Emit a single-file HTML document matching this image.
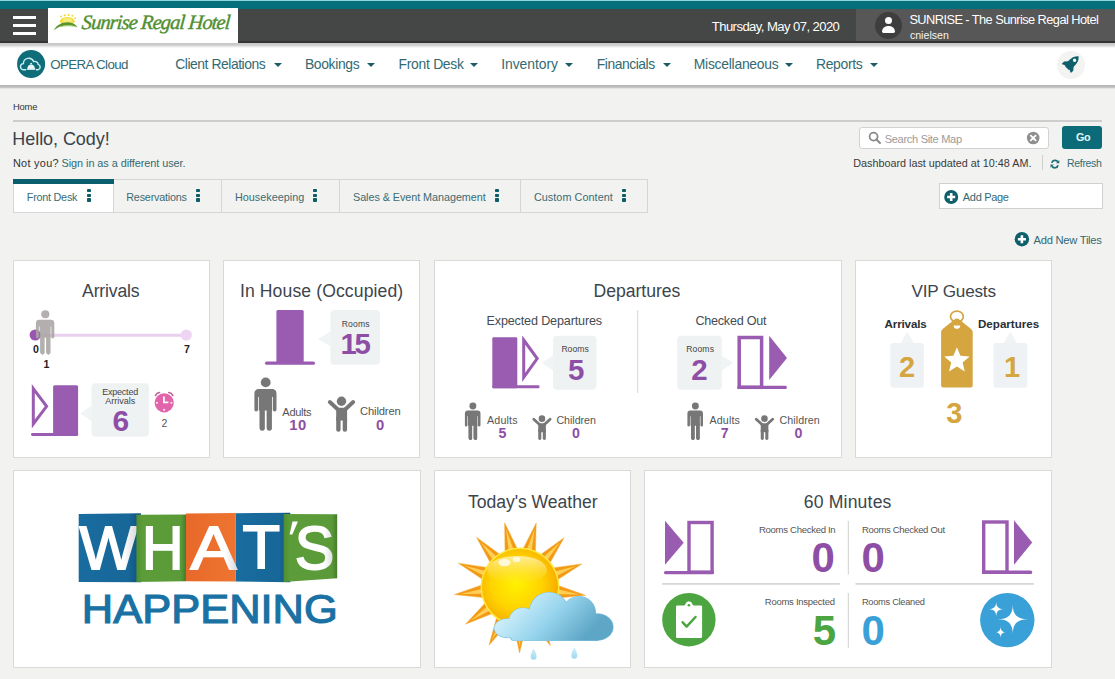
<!DOCTYPE html>
<html><head><meta charset="utf-8">
<style>
*{box-sizing:border-box;margin:0;padding:0}
html,body{width:1115px;height:679px;overflow:hidden;background:#f2f2f0;font-family:"Liberation Sans",sans-serif;color:#333;position:relative}
.a{position:absolute}
.t{position:absolute;white-space:nowrap;line-height:1}
.caret{position:absolute;width:0;height:0;border-left:4px solid transparent;border-right:4px solid transparent;border-top:4.5px solid #1d5c66}
.tile{position:absolute;background:#fff;border:1px solid #d9d9d9}
.tab{position:absolute;top:179px;height:34px;border:1px solid #d6d6d6;border-left:none;background:#f2f2f0}
.keb{position:absolute;top:189px;width:4px}
.keb i{display:block;width:3.6px;height:3.4px;background:#0f5c69;border-radius:0.8px;margin-bottom:1.2px}
.bub{position:absolute;background:#eef2f3;border-radius:3px}
svg{position:absolute;overflow:visible}
</style></head><body>
<!-- header bars -->
<div class="a" style="left:0;top:0;width:1115px;height:1px;background:#8fd3dc"></div>
<div class="a" style="left:0;top:1px;width:1115px;height:7.5px;background:#066f7c"></div>
<div class="a" style="left:0;top:8.5px;width:1115px;height:34px;background:#454646"></div>
<div class="a" style="left:856px;top:8.5px;width:259px;height:34px;background:#575757"></div>
<div class="a" style="left:0;top:41px;width:1115px;height:1.7px;background:#333"></div>
<!-- hamburger -->
<div class="a" style="left:12.5px;top:16px;width:23px;height:3px;background:#fff"></div>
<div class="a" style="left:12.5px;top:23.5px;width:23px;height:3px;background:#fff"></div>
<div class="a" style="left:12.5px;top:32px;width:23px;height:3px;background:#fff"></div>
<!-- logo -->
<div class="a" style="left:48px;top:8px;width:190px;height:35px;background:#fff"></div>
<div class="t" style="left:80.5px;top:12px;font-family:'Liberation Serif';font-style:italic;font-size:20.5px;color:#4f8f30;-webkit-text-stroke:0.4px #4f8f30;letter-spacing:-0.92px;transform:skewX(-5deg);transform-origin:0 100%">Sunrise Regal Hotel</div>
<!-- avatar -->
<div class="a" style="left:874.5px;top:11.5px;width:27px;height:27px;border-radius:50%;background:#3e3e3e"></div>
<div class="a" style="left:884.5px;top:17px;width:7px;height:7px;border-radius:50%;background:#fff"></div>
<div class="a" style="left:881.5px;top:25.5px;width:13px;height:7.5px;border-radius:6px 6px 1.5px 1.5px;background:#fff"></div>

<!-- nav -->
<div class="a" style="left:0;top:42.7px;width:1115px;height:42px;background:#fff"></div>
<div class="a" style="left:0;top:42.7px;width:1115px;height:5px;background:linear-gradient(#c6c6c6,#d0d0d0 45%,#fff)"></div>
<div class="a" style="left:0;top:84.6px;width:1115px;height:4px;background:linear-gradient(#b8b8b8,#bababa 50%,#f1f1ef)"></div>
<div class="caret" style="left:273.5px;top:62.5px"></div>
<div class="caret" style="left:367px;top:62.5px"></div>
<div class="caret" style="left:470px;top:62.5px"></div>
<div class="caret" style="left:565px;top:62.5px"></div>
<div class="caret" style="left:662.5px;top:62.5px"></div>
<div class="caret" style="left:785px;top:62.5px"></div>
<div class="caret" style="left:870px;top:62.5px"></div>
<div class="a" style="left:1056.5px;top:51px;width:28px;height:28px;border-radius:50%;background:#f3f3f1"></div>

<!-- breadcrumb line -->
<div class="a" style="left:13px;top:120px;width:1089px;height:1.5px;background:#cdcdcd"></div>

<!-- tabs -->
<div class="tab" style="left:13px;width:101px;border-left:1px solid #d6d6d6;background:#fff;border-top:none"></div>
<div class="a" style="left:13px;top:179px;width:101px;height:4.5px;background:#0b5e6b"></div>
<div class="tab" style="left:114px;width:108px"></div>
<div class="tab" style="left:222px;width:118px"></div>
<div class="tab" style="left:340px;width:181px"></div>
<div class="tab" style="left:521px;width:127px"></div>
<div class="keb" style="left:87.4px"><i></i><i></i><i></i></div>
<div class="keb" style="left:196px"><i></i><i></i><i></i></div>
<div class="keb" style="left:313px"><i></i><i></i><i></i></div>
<div class="keb" style="left:495px"><i></i><i></i><i></i></div>
<div class="keb" style="left:622px"><i></i><i></i><i></i></div>

<!-- right controls -->
<div class="a" style="left:859px;top:126.5px;width:190px;height:22.5px;background:#fff;border:1px solid #d2d2d2;border-radius:3px"></div>
<div class="a" style="left:1055px;top:126px;width:0;height:0"></div>
<div class="a" style="left:1062px;top:125.7px;width:40px;height:23px;background:#0b6b78;border-radius:3px"></div>
<div class="a" style="left:1041.5px;top:154.5px;width:1px;height:15px;background:#cfcfcf"></div>
<div class="a" style="left:939px;top:183px;width:163.5px;height:25.7px;background:#fff;border:1px solid #d0d0d0"></div>

<!-- tiles -->
<div class="tile" style="left:13px;top:260px;width:197px;height:198px"></div>
<div class="tile" style="left:223px;top:260px;width:197px;height:198px"></div>
<div class="tile" style="left:434px;top:260px;width:408px;height:198px"></div>
<div class="tile" style="left:855px;top:260px;width:197px;height:198px"></div>
<div class="tile" style="left:13px;top:470px;width:408px;height:198px"></div>
<div class="tile" style="left:434px;top:470px;width:197px;height:198px"></div>
<div class="tile" style="left:644px;top:470px;width:408px;height:198px"></div>
<svg width="1115" height="679" style="left:0;top:0" viewBox="0 0 1115 679">
<defs>
<radialGradient id="sunG" cx="0.45" cy="0.45" r="0.6">
<stop offset="0" stop-color="#fff200"/><stop offset="0.55" stop-color="#ffd400"/><stop offset="1" stop-color="#f6a400"/>
</radialGradient>
<linearGradient id="rayG" x1="0" y1="0" x2="1" y2="1">
<stop offset="0" stop-color="#ffd23a"/><stop offset="1" stop-color="#f39a10"/>
</linearGradient>
<linearGradient id="cloudG" x1="0" y1="0" x2="0.3" y2="1">
<stop offset="0" stop-color="#c9eefb"/><stop offset="0.5" stop-color="#93d0ea"/><stop offset="1" stop-color="#5aa9cc"/>
</linearGradient>
<linearGradient id="leafG" x1="0" y1="0" x2="1" y2="0">
<stop offset="0" stop-color="#4f8f2a"/><stop offset="1" stop-color="#9ccc5a"/>
</linearGradient>
</defs>

<!-- logo sun/leaf -->
<g>
<ellipse cx="67.3" cy="21.2" rx="7.4" ry="4.2" fill="#f3df45"/>
<ellipse cx="67.3" cy="20.6" rx="4.5" ry="2.6" fill="#f8ec7a"/>
<g fill="#f0d83c"><circle cx="61" cy="16.6" r="1"/><circle cx="64.6" cy="15.2" r="1"/><circle cx="68.6" cy="14.9" r="1"/><circle cx="72.4" cy="15.8" r="1"/><circle cx="75.2" cy="18" r="0.9"/></g>
<path d="M53.6,30.6C56.5,24.5 63,21.6 69,22.3C73,22.8 76.2,24.8 77.4,27.4C73.5,25.3 67,24.6 61.5,26.2C58,27.2 55.5,28.8 53.6,30.6Z" fill="#5a9630"/>
<path d="M59,27C64,24.6 71,24.4 77.4,27.4C72,26 65,26 59,27Z" fill="#9bc95a"/>
</g>
<!-- opera cloud icon -->
<circle cx="31.1" cy="64" r="14" fill="#0e6d79"/>
<path d="M26,69.8H23.8A3.1,3.1 0 0 1 23.4,63.6A5.3,5.3 0 0 1 33.6,61.6A3.4,3.4 0 0 1 38.2,64.4A2.8,2.8 0 0 1 38,69.8H36" fill="none" stroke="#c4f0f2" stroke-width="1.4"/>
<path d="M27.2,69.4A3.9,5 0 0 1 35,69.4Z" fill="#e8f6f6"/>
<rect x="26.6" y="68.8" width="8.9" height="1.1" fill="#d0e4e4"/>
<circle cx="31.1" cy="63.6" r="0.9" fill="#e8f6f6"/>
<!-- rocket -->
<g transform="translate(1070.6,64.2) rotate(45) scale(0.9)" fill="#0e5f6b">
<path d="M0,-12.5C4,-9.5 5,-4 4,3L3,6H-3L-4,3C-5,-4 -4,-9.5 0,-12.5Z"/>
<path d="M-3.8,-1L-7.2,3L-7.2,6.8L-3,5Z M3.8,-1L7.2,3L7.2,6.8L3,5Z"/>
<circle cx="0" cy="-6.3" r="1.9" fill="#e8f6f6"/>
</g>

<!-- search + clear -->
<circle cx="873.6" cy="136.6" r="4" fill="none" stroke="#8a8a8a" stroke-width="1.8"/>
<line x1="876.5" y1="139.5" x2="880" y2="143" stroke="#8a8a8a" stroke-width="2" stroke-linecap="round"/>
<circle cx="1033.2" cy="138" r="6.3" fill="#8f8f8f"/>
<path d="M1030.8,135.6L1035.6,140.4M1035.6,135.6L1030.8,140.4" stroke="#fff" stroke-width="1.8" stroke-linecap="round"/>

<!-- refresh -->
<g fill="none" stroke="#1d6b77" stroke-width="1.7">
<path d="M1051.8,162.9A3.3,3.3 0 0 1 1057.8,161.8"/>
<path d="M1058,165.2A3.3,3.3 0 0 1 1052,166.3"/>
</g>
<path d="M1059.3,159.9V163.2H1056Z M1050.5,167.8V164.5H1053.8Z" fill="#1d6b77"/>
<!-- plus circles -->
<circle cx="951.2" cy="197" r="7" fill="#0e5f6c"/>
<path d="M947.2,197H955.2M951.2,193V201" stroke="#fff" stroke-width="2.6"/>
<circle cx="1021.9" cy="239.2" r="7.2" fill="#0e5f6c"/>
<path d="M1017.9,239.2H1025.9M1021.9,235.2V243.2" stroke="#fff" stroke-width="2.6"/>

<!-- ===== Tile 1 Arrivals ===== -->
<line x1="36" y1="335.2" x2="186" y2="335.2" stroke="#ead0ef" stroke-width="3"/>
<circle cx="35.2" cy="335" r="5.6" fill="#9a55b2"/>
<circle cx="186.3" cy="335" r="5.6" fill="#edd5f3"/>
<g transform="translate(35.9,310.2) scale(0.8326,0.8324)" fill="#a9a5a3" opacity="0.88"><circle cx="11.3" cy="4.9" r="4.9"/>
<path d="M4.2,11.5H17.9A4.2,4.2 0 0 1 22.1,15.7V32.3A1.8,1.8 0 0 1 18.5,32.3V19.5H17.7V33H4.4V19.5H3.6V32.3A1.8,1.8 0 0 1 0,32.3V15.7A4.2,4.2 0 0 1 4.2,11.5Z"/>
<path d="M5.3,30H10.2V51A2.1,2.1 0 0 1 6,51H5.3Z M12.4,30H17.3V51A2.1,2.1 0 0 1 13.1,51H12.4Z"/>
<rect x="5.3" y="30" width="4.9" height="23.1" rx="2.2"/>
<rect x="12.4" y="30" width="4.9" height="23.1" rx="2.2"/></g>
<path d="M33.3,388.6L46.6,406.3L33.3,424Z" fill="none" stroke="#9a5cb0" stroke-width="3"/>
<rect x="53.1" y="385.3" width="25" height="50.4" rx="1.5" fill="#9a5cb0"/>
<rect x="31" y="433" width="47.1" height="3" rx="1.4" fill="#9a5cb0"/>
<rect x="91.6" y="383.3" width="57.3" height="53.5" rx="4" fill="#eef2f3"/>
<path d="M91.8,405.6L80.4,413.5L91.8,421.5Z" fill="#f1f4f4"/>
<path d="M155.5,395.5A5,5 0 0 1 159.5,392.5M168.8,392.5A5,5 0 0 1 172.8,395.5" stroke="#b8638e" stroke-width="1.6" fill="none" stroke-linecap="round"/>
<circle cx="164.2" cy="402.8" r="9.6" fill="#e264aa"/>
<path d="M163.9,396.4V402.4H168.4" stroke="#fff" stroke-width="1.8" fill="none"/>
<circle cx="156.9" cy="402.8" r="1.1" fill="#fbe0ef"/><circle cx="171.4" cy="402.8" r="1.1" fill="#fbe0ef"/><circle cx="164.1" cy="409.8" r="1.1" fill="#fbe0ef"/>

<!-- ===== Tile 2 In House ===== -->
<rect x="276.4" y="310" width="27.3" height="53" rx="1.5" fill="#9a5cb0"/>
<rect x="265" y="361.6" width="50" height="3.2" rx="1.6" fill="#9a5cb0"/>
<rect x="330.4" y="310" width="49.6" height="54.7" rx="4" fill="#eef2f3"/>
<path d="M330.6,331.5L317.8,339L330.6,346.5Z" fill="#f1f4f4"/>
<g transform="translate(254.4,377.5) scale(1.0000,1.0000)" fill="#777"><circle cx="11.3" cy="4.9" r="4.9"/>
<path d="M4.2,11.5H17.9A4.2,4.2 0 0 1 22.1,15.7V32.3A1.8,1.8 0 0 1 18.5,32.3V19.5H17.7V33H4.4V19.5H3.6V32.3A1.8,1.8 0 0 1 0,32.3V15.7A4.2,4.2 0 0 1 4.2,11.5Z"/>
<path d="M5.3,30H10.2V51A2.1,2.1 0 0 1 6,51H5.3Z M12.4,30H17.3V51A2.1,2.1 0 0 1 13.1,51H12.4Z"/>
<rect x="5.3" y="30" width="4.9" height="23.1" rx="2.2"/>
<rect x="12.4" y="30" width="4.9" height="23.1" rx="2.2"/></g>
<g transform="translate(325.0,394.0) scale(1.0000,1.0000)" fill="#777" stroke="#777"><circle cx="16.5" cy="7.2" r="4.7" stroke="none"/>
<path d="M4.8,8L12.6,15.2M28.2,8L20.4,15.2" stroke-width="3.9" stroke-linecap="round" fill="none"/>
<path d="M13,13.8H20.3A1.8,1.8 0 0 1 22.1,15.6V26.5H11.2V15.6A1.8,1.8 0 0 1 13,13.8Z" stroke="none"/>
<rect x="11.2" y="22" width="4.4" height="15.8" rx="2.1" stroke="none"/>
<rect x="17.7" y="22" width="4.4" height="15.8" rx="2.1" stroke="none"/></g>

<!-- ===== Tile 3 Departures ===== -->
<rect x="492.3" y="337.3" width="25" height="50.9" rx="1.2" fill="#9a5cb0"/>
<path d="M523.7,340L537.2,358.6L523.7,377.3Z" fill="none" stroke="#9a5cb0" stroke-width="3"/>
<rect x="492.3" y="385.2" width="47.2" height="3" rx="1.2" fill="#9a5cb0"/>
<rect x="552.9" y="335.7" width="43.6" height="54.1" rx="4" fill="#eef2f3"/>
<path d="M553.1,355.5L541.6,363L553.1,370.5Z" fill="#f1f4f4"/>
<line x1="637.6" y1="310.3" x2="637.6" y2="393.1" stroke="#dcdcdc" stroke-width="1.2"/>
<rect x="677.2" y="335.7" width="44.6" height="54.1" rx="4" fill="#eef2f3"/>
<path d="M721.6,355.5L733.4,363L721.6,370.5Z" fill="#f1f4f4"/>
<rect x="739.2" y="337.5" width="22.4" height="49.8" fill="none" stroke="#9a5cb0" stroke-width="3.5"/>
<path d="M769.2,335.7L787,358L769.2,380.1Z" fill="#9a5cb0"/>
<rect x="737.4" y="385.7" width="49.4" height="3.3" rx="1.2" fill="#9a5cb0"/>
<g transform="translate(464.9,402.5) scale(0.7059,0.7043)" fill="#777"><circle cx="11.3" cy="4.9" r="4.9"/>
<path d="M4.2,11.5H17.9A4.2,4.2 0 0 1 22.1,15.7V32.3A1.8,1.8 0 0 1 18.5,32.3V19.5H17.7V33H4.4V19.5H3.6V32.3A1.8,1.8 0 0 1 0,32.3V15.7A4.2,4.2 0 0 1 4.2,11.5Z"/>
<path d="M5.3,30H10.2V51A2.1,2.1 0 0 1 6,51H5.3Z M12.4,30H17.3V51A2.1,2.1 0 0 1 13.1,51H12.4Z"/>
<rect x="5.3" y="30" width="4.9" height="23.1" rx="2.2"/>
<rect x="12.4" y="30" width="4.9" height="23.1" rx="2.2"/></g>
<g transform="translate(530.4,413.6) scale(0.7000,0.7000)" fill="#777" stroke="#777"><circle cx="16.5" cy="7.2" r="4.7" stroke="none"/>
<path d="M4.8,8L12.6,15.2M28.2,8L20.4,15.2" stroke-width="3.9" stroke-linecap="round" fill="none"/>
<path d="M13,13.8H20.3A1.8,1.8 0 0 1 22.1,15.6V26.5H11.2V15.6A1.8,1.8 0 0 1 13,13.8Z" stroke="none"/>
<rect x="11.2" y="22" width="4.4" height="15.8" rx="2.1" stroke="none"/>
<rect x="17.7" y="22" width="4.4" height="15.8" rx="2.1" stroke="none"/></g>
<g transform="translate(687.4,402.5) scale(0.7059,0.7043)" fill="#777"><circle cx="11.3" cy="4.9" r="4.9"/>
<path d="M4.2,11.5H17.9A4.2,4.2 0 0 1 22.1,15.7V32.3A1.8,1.8 0 0 1 18.5,32.3V19.5H17.7V33H4.4V19.5H3.6V32.3A1.8,1.8 0 0 1 0,32.3V15.7A4.2,4.2 0 0 1 4.2,11.5Z"/>
<path d="M5.3,30H10.2V51A2.1,2.1 0 0 1 6,51H5.3Z M12.4,30H17.3V51A2.1,2.1 0 0 1 13.1,51H12.4Z"/>
<rect x="5.3" y="30" width="4.9" height="23.1" rx="2.2"/>
<rect x="12.4" y="30" width="4.9" height="23.1" rx="2.2"/></g>
<g transform="translate(752.9,413.6) scale(0.7000,0.7000)" fill="#777" stroke="#777"><circle cx="16.5" cy="7.2" r="4.7" stroke="none"/>
<path d="M4.8,8L12.6,15.2M28.2,8L20.4,15.2" stroke-width="3.9" stroke-linecap="round" fill="none"/>
<path d="M13,13.8H20.3A1.8,1.8 0 0 1 22.1,15.6V26.5H11.2V15.6A1.8,1.8 0 0 1 13,13.8Z" stroke="none"/>
<rect x="11.2" y="22" width="4.4" height="15.8" rx="2.1" stroke="none"/>
<rect x="17.7" y="22" width="4.4" height="15.8" rx="2.1" stroke="none"/></g>

<!-- ===== Tile 4 VIP ===== -->
<rect x="890.3" y="343.1" width="33.5" height="44.6" rx="3" fill="#eef2f4"/>
<path d="M900.5,343.3L907.2,331.6L913.9,343.3Z" fill="#f1f4f5"/>
<rect x="993.4" y="343.1" width="33.9" height="44.6" rx="3" fill="#eef2f4"/>
<path d="M1003.6,343.3L1010.3,331.6L1017,343.3Z" fill="#f1f4f5"/>
<ellipse cx="956.9" cy="316.6" rx="6.4" ry="5.5" fill="none" stroke="#d5a540" stroke-width="1.7"/>
<path d="M943,328.8L954.5,319.4Q956.9,317.8 959.3,319.4L970.8,328.8Q972.7,330 972.7,332V385.6Q972.7,387.6 970.7,387.6H943.1Q941.1,387.6 941.1,385.6V332Q941.1,330 943,328.8Z" fill="#d5a540"/>
<path d="M953.6,325.6A3.3,3.3 0 0 0 960.2,325.6Z" fill="#fff"/>
<polygon points="956.9,347.2 960.4,355.7 969.6,356.5 962.6,362.5 964.8,371.4 956.9,366.6 949.0,371.4 951.2,362.5 944.2,356.5 953.4,355.7" fill="#fff"/>

<!-- ===== Tile 7 60 Minutes ===== -->
<path d="M665,520.8L683.7,542.8L665,564.7Z" fill="#9a5cb0"/>
<rect x="689" y="522.5" width="23.1" height="49.6" fill="none" stroke="#9a5cb0" stroke-width="3.4"/>
<rect x="664" y="571" width="50" height="3.2" rx="1.5" fill="#9a5cb0"/>
<line x1="848.4" y1="520.8" x2="848.4" y2="574.6" stroke="#d9d9d9" stroke-width="1.3"/>
<line x1="662.2" y1="583.8" x2="839.8" y2="583.8" stroke="#d6d6d6" stroke-width="1.8"/>
<line x1="855.5" y1="583.8" x2="1033.8" y2="583.8" stroke="#d6d6d6" stroke-width="1.8"/>
<rect x="983.7" y="522" width="23.3" height="50.3" fill="none" stroke="#9a5cb0" stroke-width="3.4"/>
<path d="M1014,520.3L1032.2,542.5L1014,564.8Z" fill="#9a5cb0"/>
<rect x="982" y="570.6" width="50.2" height="3.3" rx="1.5" fill="#9a5cb0"/>
<line x1="848.4" y1="593" x2="848.4" y2="647.8" stroke="#d9d9d9" stroke-width="1.3"/>
<circle cx="688.9" cy="619.7" r="26.7" fill="#4ca540"/>
<rect x="676" y="605.4" width="26.1" height="32.5" rx="1.2" fill="#fff"/>
<path d="M683.2,606.5Q685,606 685.6,603.8A3.4,3.4 0 0 1 692.2,603.8Q692.8,606 694.6,606.5Z" fill="#fff"/>
<circle cx="688.9" cy="605.3" r="1.3" fill="#4ca540"/>
<path d="M682.7,622.3L686.6,626.6L695.5,617" stroke="#4ca540" stroke-width="2.5" fill="none" stroke-linecap="round" stroke-linejoin="round"/>
<circle cx="1007.3" cy="620.1" r="27.2" fill="#3aa1d8"/>
<path d="M1012.80,604.20C1012.80,614.70 1017.30,619.20 1027.80,619.20C1017.30,619.20 1012.80,623.70 1012.80,634.20C1012.80,623.70 1008.30,619.20 997.80,619.20C1008.30,619.20 1012.80,614.70 1012.80,604.20Z" fill="#fff"/>
<path d="M996.20,601.60C996.20,606.92 998.48,609.20 1003.80,609.20C998.48,609.20 996.20,611.48 996.20,616.80C996.20,611.48 993.92,609.20 988.60,609.20C993.92,609.20 996.20,606.92 996.20,601.60Z" fill="#fff"/>
<path d="M1000.60,626.20C1000.60,630.40 1002.40,632.20 1006.60,632.20C1002.40,632.20 1000.60,634.00 1000.60,638.20C1000.60,634.00 998.80,632.20 994.60,632.20C998.80,632.20 1000.60,630.40 1000.60,626.20Z" fill="#fff"/>
</svg>
<svg width="1115" height="679" style="left:0;top:0" viewBox="0 0 1115 679">
<!-- ===== What's Happening ===== -->
<defs>
<linearGradient id="shB" x1="0" y1="0" x2="1" y2="0"><stop offset="0" stop-color="#196c9f"/><stop offset="0.8" stop-color="#176798"/><stop offset="1" stop-color="#0f5079"/></linearGradient>
<linearGradient id="shG" x1="0" y1="0" x2="1" y2="0"><stop offset="0" stop-color="#4e8e30"/><stop offset="0.12" stop-color="#5c9d3a"/><stop offset="0.9" stop-color="#5a9a38"/><stop offset="1" stop-color="#457c2a"/></linearGradient>
<linearGradient id="shO" x1="0" y1="0" x2="1" y2="0"><stop offset="0" stop-color="#e8692a"/><stop offset="1" stop-color="#ee7430"/></linearGradient>
<linearGradient id="wL" x1="0" y1="0" x2="1" y2="0"><stop offset="0" stop-color="#ffffff"/><stop offset="0.75" stop-color="#ffffff"/><stop offset="1" stop-color="#d8d8dc"/></linearGradient>
</defs>
<path d="M78.7,513.9L140.9,513.2L141,582.3L78.7,582Z" fill="url(#shB)"/>
<path d="M235.5,513.2L290.3,512.8L290.3,582.3L235.5,581.6Z" fill="url(#shB)"/>
<path d="M185.9,513.6L235.6,513L235.6,581.6L185.9,581.3Z" fill="url(#shO)"/>
<text x="79.5" y="568.6" font-family="Liberation Sans" font-weight="400" font-size="60.5" fill="url(#wL)" stroke="url(#wL)" stroke-width="1.8" textLength="58" lengthAdjust="spacingAndGlyphs">W</text>
<path d="M136.4,514.7L186,514.4L186,581.3L136.4,582Z" fill="url(#shG)"/>
<path d="M283.6,513.9L337.2,514.2L337.2,578.3L283.6,582Z" fill="url(#shG)"/>
<text x="142" y="568.6" font-family="Liberation Sans" font-weight="400" font-size="60.5" fill="#fff" stroke="#fff" stroke-width="1.8" textLength="41.5" lengthAdjust="spacingAndGlyphs">H</text>
<text x="190.6" y="568.6" font-family="Liberation Sans" font-weight="400" font-size="60.5" fill="url(#wL)" stroke="url(#wL)" stroke-width="1.8" textLength="46" lengthAdjust="spacingAndGlyphs">A</text>
<text x="242.5" y="568" font-family="Liberation Sans" font-weight="400" font-size="60.5" fill="#fff" stroke="#fff" stroke-width="1.8" textLength="37.5" lengthAdjust="spacingAndGlyphs">T</text>
<path d="M289.6,534.6L292.5,521.6L298,521.6L292.3,534.6Z" fill="#fff"/>
<text x="294.8" y="568.7" font-family="Liberation Sans" font-weight="400" font-size="60.5" fill="url(#wL)" stroke="url(#wL)" stroke-width="1.8" textLength="39.5" lengthAdjust="spacingAndGlyphs">S</text>
<text x="81.8" y="622.6" font-family="Liberation Sans" font-weight="400" font-size="41" fill="#1a72a4" stroke="#1a72a4" stroke-width="1.2" textLength="256" lengthAdjust="spacingAndGlyphs">HAPPENING</text>

<!-- ===== Weather ===== -->
<defs>
<radialGradient id="sunG" cx="0.5" cy="0.6" r="0.55">
<stop offset="0" stop-color="#fff500"/><stop offset="0.55" stop-color="#ffd000"/><stop offset="1" stop-color="#f59e00"/>
</radialGradient>
<linearGradient id="hiG" x1="0" y1="0" x2="0" y2="1">
<stop offset="0" stop-color="#fff3b8" stop-opacity="0.85"/><stop offset="1" stop-color="#ffe040" stop-opacity="0.05"/>
</linearGradient>
<linearGradient id="cloudU" gradientUnits="userSpaceOnUse" x1="520" y1="596" x2="575" y2="648"><stop offset="0" stop-color="#d0f0fb"/><stop offset="0.5" stop-color="#95d3ec"/><stop offset="1" stop-color="#5ea6c6"/></linearGradient>
<linearGradient id="dropG" x1="0" y1="0" x2="0" y2="1">
<stop offset="0" stop-color="#d2f0fa"/><stop offset="1" stop-color="#9fd8ef"/>
</linearGradient>
</defs>
<path d="M486.4,581.9L458.4,563.2L491.7,568.2ZM492.6,566.9L476.5,537.3L503.7,557.2ZM505.1,556.4L504.6,522.8L519.4,553.0ZM521.0,553.0L536.2,523.0L535.3,556.6ZM536.7,557.4L564.0,537.8L547.6,567.2ZM548.5,568.5L581.8,563.9L553.7,582.3ZM553.9,583.9L585.5,595.3L552.0,598.5ZM551.4,600.0L574.1,624.8L543.0,612.0ZM541.8,613.1L550.4,645.6L528.7,619.9ZM527.2,620.2L519.6,653.0L512.5,620.2ZM510.9,619.8L489.0,645.3L497.9,612.9ZM496.7,611.8L465.5,624.2L488.4,599.6ZM487.9,598.1L454.4,594.6L486.2,583.5Z" fill="#f29a16" stroke="#f6ad3a" stroke-width="0.5"/>
<path d="M484.6,576.1L464.0,565.4L486.5,571.3ZM493.7,560.9L480.5,541.9L497.6,557.5ZM508.9,551.7L506.0,528.7L513.9,550.5ZM526.5,550.6L534.7,528.8L531.5,551.8ZM542.7,557.8L560.0,542.3L546.6,561.2ZM553.7,571.7L576.2,566.0L555.5,576.5ZM556.9,589.1L579.5,594.6L556.3,594.2ZM551.7,606.0L569.2,621.4L548.8,610.2ZM539.3,618.6L547.6,640.3L534.7,621.0ZM522.4,623.9L519.7,647.0L517.2,623.9ZM505.0,620.8L491.8,640.0L500.4,618.4ZM491.0,609.9L470.4,620.8L488.1,605.7ZM483.6,593.8L460.4,593.9L483.0,588.7Z" fill="#ffcf55"/>
<circle cx="520" cy="587" r="39.5" fill="#ffe83a"/>
<circle cx="520" cy="587" r="38" fill="url(#sunG)"/>
<ellipse cx="517" cy="570" rx="30" ry="14" fill="url(#hiG)"/>
<ellipse cx="504.5" cy="562.6" rx="6" ry="3.6" fill="#fffbe8" opacity="0.9"/>
<ellipse cx="516.5" cy="559.4" rx="3.8" ry="2.6" fill="#fffbe8" opacity="0.85"/>
<g fill="#86c6e0">
<ellipse cx="507.5" cy="628.2" rx="13.6" ry="10"/><circle cx="523" cy="622" r="14.6"/><circle cx="549" cy="612" r="20.1"/><circle cx="579" cy="613" r="17.1"/><ellipse cx="597" cy="627" rx="16.6" ry="13.8"/>
<path d="M510,624H598V641H514Q510,641 510,637Z"/>
</g>
<g fill="url(#cloudU)">
<ellipse cx="507.5" cy="628.2" rx="13" ry="9.4"/><circle cx="523" cy="622" r="14"/><circle cx="549" cy="612" r="19.5"/><circle cx="579" cy="613" r="16.5"/><ellipse cx="597" cy="627" rx="16" ry="13.2"/>
<path d="M511,624H598V640.4H515Q511,640.4 511,636.8Z"/><rect x="535" y="606" width="45" height="20"/>
</g>
<path d="M533.6,648.3C531.6,652 530.6,654.5 530.6,656.8A3,3 0 0 0 536.6,656.8C536.6,654.5 535.6,652 533.6,648.3Z" fill="url(#dropG)"/>
<path d="M574.3,647.3C572.3,651 571.3,653.5 571.3,655.8A3,3 0 0 0 577.3,655.8C577.3,653.5 576.3,651 574.3,647.3Z" fill="url(#dropG)"/>
</svg>

<!-- texts -->
<div class="t" style="left:711.8px;top:19.8px;font-size:13.08px;color:#fff;letter-spacing:-0.57px">Thursday, May 07, 2020</div>
<div class="t" style="left:909.4px;top:13.7px;font-size:12.82px;color:#fff;letter-spacing:-0.57px">SUNRISE - The Sunrise Regal Hotel</div>
<div class="t" style="left:909.9px;top:29.5px;font-size:10.6px;color:#f4f4f4;letter-spacing:0.02px">cnielsen</div>
<div class="t" style="left:50.2px;top:58.1px;font-size:13.33px;color:#336a72;letter-spacing:-0.62px">OPERA Cloud</div>
<div class="t" style="left:175.2px;top:57.9px;font-size:13.9px;color:#336a72;letter-spacing:-0.45px">Client Relations</div>
<div class="t" style="left:304.9px;top:57.9px;font-size:13.9px;color:#336a72;letter-spacing:-0.34px">Bookings</div>
<div class="t" style="left:398.6px;top:57.9px;font-size:13.9px;color:#336a72;letter-spacing:-0.29px">Front Desk</div>
<div class="t" style="left:501.2px;top:57.9px;font-size:13.9px;color:#336a72;letter-spacing:-0.05px">Inventory</div>
<div class="t" style="left:596.8px;top:57.9px;font-size:13.9px;color:#336a72;letter-spacing:-0.47px">Financials</div>
<div class="t" style="left:693.8px;top:57.9px;font-size:13.9px;color:#336a72;letter-spacing:-0.26px">Miscellaneous</div>
<div class="t" style="left:816.0px;top:57.9px;font-size:13.9px;color:#336a72;letter-spacing:-0.33px">Reports</div>
<div class="t" style="left:12.9px;top:102.4px;font-size:9.4px;color:#333;letter-spacing:-0.16px">Home</div>
<div class="t" style="left:12.3px;top:129.7px;font-size:18px;color:#3a424a;letter-spacing:-0.06px">Hello, Cody!</div>
<div class="t" style="left:12.9px;top:157.9px;font-size:10.9px;color:#333;letter-spacing:0.30px">Not you?</div>
<div class="t" style="left:61.5px;top:157.9px;font-size:10.9px;color:#336a72;letter-spacing:-0.06px">Sign in as a different user.</div>
<div class="t" style="left:26.8px;top:192.2px;font-size:10.8px;color:#3b6b74;letter-spacing:-0.24px">Front Desk</div>
<div class="t" style="left:126.3px;top:192.2px;font-size:10.78px;color:#3b6b74;letter-spacing:-0.20px">Reservations</div>
<div class="t" style="left:235.0px;top:192.2px;font-size:10.8px;color:#3b6b74;letter-spacing:0.02px">Housekeeping</div>
<div class="t" style="left:353.0px;top:192.2px;font-size:10.8px;color:#3b6b74;letter-spacing:-0.05px">Sales &amp; Event Management</div>
<div class="t" style="left:533.9px;top:192.2px;font-size:10.8px;color:#3b6b74;letter-spacing:0.07px">Custom Content</div>
<div class="t" style="left:884.7px;top:133.7px;font-size:11.08px;color:#9b9b9b;letter-spacing:-0.32px">Search Site Map</div>
<div class="t" style="left:1076.0px;top:132.4px;font-size:10.8px;color:#e6f6f6;font-weight:700;letter-spacing:-0.4px">Go</div>
<div class="t" style="left:853.2px;top:158.2px;font-size:10.8px;color:#3a3a3a">Dashboard last updated at 10:48 AM.</div>
<div class="t" style="left:1067.0px;top:159.0px;font-size:10.49px;color:#336a72;letter-spacing:-0.31px">Refresh</div>
<div class="t" style="left:962.8px;top:192.3px;font-size:11.01px;color:#336a72;letter-spacing:-0.31px">Add Page</div>
<div class="t" style="left:1033.6px;top:235.3px;font-size:11.2px;color:#336a72;letter-spacing:-0.27px">Add New Tiles</div>
<div class="t" style="left:82.1px;top:282.5px;font-size:17.6px;color:#3d454c;letter-spacing:-0.16px">Arrivals</div>
<div class="t" style="left:239.9px;top:282.5px;font-size:17.6px;color:#3d454c;letter-spacing:0.11px">In House (Occupied)</div>
<div class="t" style="left:593.6px;top:282.5px;font-size:17.6px;color:#3d454c;letter-spacing:-0.04px">Departures</div>
<div class="t" style="left:911.5px;top:282.9px;font-size:17.15px;color:#3d454c;letter-spacing:-0.21px">VIP Guests</div>
<div class="t" style="left:467.9px;top:493.5px;font-size:17.6px;color:#3d454c;letter-spacing:-0.04px">Today's Weather</div>
<div class="t" style="left:803.8px;top:493.5px;font-size:17.6px;color:#3d454c;letter-spacing:0.17px">60 Minutes</div>
<div class="t" style="left:33.0px;top:344.1px;font-size:10.6px;color:#222;font-weight:700">0</div>
<div class="t" style="left:184.0px;top:344.1px;font-size:10.6px;color:#222;font-weight:700">7</div>
<div class="t" style="left:43.4px;top:359.2px;font-size:10.6px;color:#222;font-weight:700">1</div>
<div class="t" style="left:102.2px;top:388.0px;font-size:9px;color:#444;letter-spacing:-0.22px">Expected</div>
<div class="t" style="left:105.3px;top:397.2px;font-size:9px;color:#444;letter-spacing:-0.01px">Arrivals</div>
<div class="t" style="left:112.5px;top:406.2px;font-size:30px;color:#8e4ea6;font-weight:700">6</div>
<div class="t" style="left:161.4px;top:418.1px;font-size:10.5px;color:#555">2</div>
<div class="t" style="left:341.7px;top:319.8px;font-size:8.6px;color:#444;letter-spacing:0.17px">Rooms</div>
<div class="t" style="left:340.4px;top:329.2px;font-size:29.5px;color:#8e4ea6;font-weight:700;letter-spacing:-2.21px">15</div>
<div class="t" style="left:282.3px;top:406.5px;font-size:11.09px;color:#555;letter-spacing:-0.31px">Adults</div>
<div class="t" style="left:289.2px;top:417.7px;font-size:14.8px;color:#8e4ea6;font-weight:700;letter-spacing:0.57px">10</div>
<div class="t" style="left:360.0px;top:406.4px;font-size:11.2px;color:#555;letter-spacing:-0.13px">Children</div>
<div class="t" style="left:376.0px;top:417.7px;font-size:14.8px;color:#8e4ea6;font-weight:700">0</div>
<div class="t" style="left:486.5px;top:315.0px;font-size:12.6px;color:#444c52;letter-spacing:-0.15px">Expected Departures</div>
<div class="t" style="left:695.4px;top:315.0px;font-size:12.6px;color:#444c52;letter-spacing:-0.24px">Checked Out</div>
<div class="t" style="left:561.4px;top:345.4px;font-size:8.6px;color:#444;letter-spacing:0.02px">Rooms</div>
<div class="t" style="left:567.9px;top:354.7px;font-size:29.5px;color:#8e4ea6;font-weight:700">5</div>
<div class="t" style="left:686.2px;top:345.4px;font-size:8.6px;color:#444;letter-spacing:0.14px">Rooms</div>
<div class="t" style="left:691.2px;top:354.7px;font-size:29.5px;color:#8e4ea6;font-weight:700">2</div>
<div class="t" style="left:487.0px;top:415.1px;font-size:10.7px;color:#555;letter-spacing:0.17px">Adults</div>
<div class="t" style="left:498.4px;top:426.1px;font-size:14.2px;color:#8e4ea6;font-weight:700">5</div>
<div class="t" style="left:556.4px;top:415.1px;font-size:10.7px;color:#555;letter-spacing:-0.04px">Children</div>
<div class="t" style="left:572.0px;top:426.1px;font-size:14.2px;color:#8e4ea6;font-weight:700">0</div>
<div class="t" style="left:709.5px;top:415.1px;font-size:10.7px;color:#555;letter-spacing:0.15px">Adults</div>
<div class="t" style="left:720.8px;top:426.1px;font-size:14.2px;color:#8e4ea6;font-weight:700">7</div>
<div class="t" style="left:779.5px;top:415.1px;font-size:10.7px;color:#555;letter-spacing:0.06px">Children</div>
<div class="t" style="left:794.6px;top:426.1px;font-size:14.2px;color:#8e4ea6;font-weight:700">0</div>
<div class="t" style="left:884.6px;top:318.4px;font-size:11.6px;color:#2a2f35;font-weight:700;letter-spacing:-0.15px">Arrivals</div>
<div class="t" style="left:978.0px;top:318.4px;font-size:11.6px;color:#2a2f35;font-weight:700">Departures</div>
<div class="t" style="left:898.9px;top:352.5px;font-size:29px;color:#d5a540;font-weight:700">2</div>
<div class="t" style="left:1003.9px;top:352.5px;font-size:29px;color:#d5a540;font-weight:700">1</div>
<div class="t" style="left:946.3px;top:398.5px;font-size:29px;color:#d5a540;font-weight:700">3</div>
<div class="t" style="left:759.0px;top:525.3px;font-size:9.59px;color:#555;letter-spacing:-0.32px">Rooms Checked In</div>
<div class="t" style="left:811.5px;top:537.2px;font-size:42px;color:#8e4ea6;font-weight:700">0</div>
<div class="t" style="left:861.9px;top:525.2px;font-size:9.51px;color:#555;letter-spacing:-0.31px">Rooms Checked Out</div>
<div class="t" style="left:861.6px;top:536.9px;font-size:42px;color:#8e4ea6;font-weight:700">0</div>
<div class="t" style="left:764.8px;top:597.1px;font-size:9.49px;color:#555;letter-spacing:-0.26px">Rooms Inspected</div>
<div class="t" style="left:812.7px;top:609.9px;font-size:42px;color:#4ca540;font-weight:700">5</div>
<div class="t" style="left:861.9px;top:598.0px;font-size:9.26px;color:#555;letter-spacing:-0.27px">Rooms Cleaned</div>
<div class="t" style="left:861.6px;top:609.5px;font-size:42px;color:#3aa1d8;font-weight:700">0</div>
</body></html>
